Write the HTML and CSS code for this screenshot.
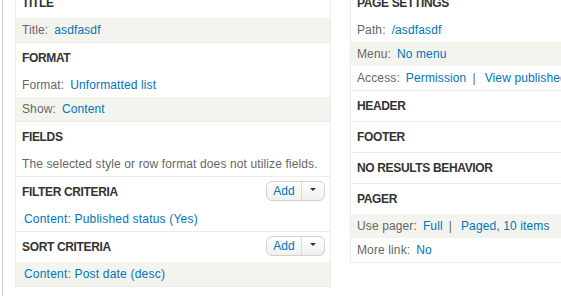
FILE: index.html
```html
<!DOCTYPE html>
<html>
<head>
<meta charset="utf-8">
<link rel="stylesheet" href="styles.css">
</head>
<body>
<div class="wrap">
  <div class="columns">
    <div class="col col-left">
      <section class="bucket">
        <h3 class="bucket-title">Title</h3>
        <div class="row alt"><span class="label">Title:</span><a class="link">asdfasdf</a></div>
      </section>
      <section class="bucket">
        <h3 class="bucket-title">Format</h3>
        <div class="row"><span class="label">Format:</span><a class="link">Unformatted list</a></div>
        <div class="row alt"><span class="label">Show:</span><a class="link">Content</a></div>
      </section>
      <section class="bucket">
        <h3 class="bucket-title">Fields</h3>
        <div class="row"><span class="label">The selected style or row format does not utilize fields.</span></div>
      </section>
      <section class="bucket">
        <h3 class="bucket-title">Filter criteria
          <span class="btn"><span class="btn-main">Add</span><span class="btn-drop"><span class="caret"></span></span></span>
        </h3>
        <div class="row indent"><a class="link">Content: Published status (Yes)</a></div>
      </section>
      <section class="bucket">
        <h3 class="bucket-title">Sort criteria
          <span class="btn"><span class="btn-main">Add</span><span class="btn-drop"><span class="caret"></span></span></span>
        </h3>
        <div class="row alt indent"><a class="link">Content: Post date (desc)</a></div>
      </section>
    </div>
    <div class="col col-right">
      <section class="bucket">
        <h3 class="bucket-title">Page settings</h3>
        <div class="row"><span class="label">Path:</span><a class="link">/asdfasdf</a></div>
        <div class="row alt"><span class="label">Menu:</span><a class="link">No menu</a></div>
        <div class="row"><span class="label">Access:</span><a class="link">Permission</a><span class="sep">|</span><a class="link">View published content</a></div>
      </section>
      <section class="bucket">
        <h3 class="bucket-title">Header</h3>
      </section>
      <section class="bucket">
        <h3 class="bucket-title">Footer</h3>
      </section>
      <section class="bucket">
        <h3 class="bucket-title">No results behavior</h3>
      </section>
      <section class="bucket">
        <h3 class="bucket-title">Pager</h3>
        <div class="row alt"><span class="label">Use pager:</span><a class="link">Full</a><span class="sep">|</span><a class="link">Paged, 10 items</a></div>
        <div class="row"><span class="label">More link:</span><a class="link">No</a></div>
      </section>
    </div>
  </div>
</div>
</body>
</html>
```

FILE: styles.css
```css
html, body {
  margin: 0;
  padding: 0;
  background: #fff;
  overflow: hidden;
}
body {
  font-family: "Liberation Sans", Arial, sans-serif;
  font-size: 12px;
  color: #333;
}
.wrap {
  margin-left: 2px;
  border-left: 1px solid #cfcfcf;
  padding-left: 12px;
  min-height: 320px;
}
.columns {
  display: flex;
  gap: 19px;
  margin-top: -13px;
  align-items: flex-start;
}
.col {
  flex: none;
  border: 1px solid #ececec;
  border-top: none;
  background: #fff;
}
.col-left {
  width: 314px;
}
.col-right {
  width: 320px;
}
.bucket {
  border-top: 1px solid #ececec;
}
.bucket-title {
  margin: 0;
  height: 30px;
  padding: 0 5px 0 6px;
  display: flex;
  align-items: center;
  justify-content: space-between;
  font-size: 12px;
  font-weight: bold;
  text-transform: uppercase;
  letter-spacing: -0.35px;
  color: #333;
}
.row {
  padding: 5px 6px;
  line-height: 14px;
  color: #666;
  white-space: nowrap;
  letter-spacing: 0.12px;
}
.row.alt {
  background: #f3f4ee;
}
.row.indent {
  padding-left: 8px;
  letter-spacing: 0.2px;
}
.label {
  margin-right: 6px;
}
.link {
  color: #0074bd;
  text-decoration: none;
}
.sep {
  color: #666;
  margin: 0 9px 0 6px;
}
.btn {
  display: flex;
  height: 18px;
  border: 1px solid #d0d0d0;
  border-radius: 6px;
  background: linear-gradient(#ffffff, #f0f0ec);
  margin-top: -2px;
  letter-spacing: 0;
}
.btn-main {
  width: 34px;
  text-align: center;
  line-height: 18px;
  font-weight: normal;
  text-transform: none;
  color: #0074bd;
}
.btn-drop {
  width: 23px;
  border-left: 1px solid #dcdcdc;
  display: flex;
  justify-content: center;
  padding-top: 6px;
  box-sizing: border-box;
}
.caret {
  width: 0;
  height: 0;
  border-left: 3px solid transparent;
  border-right: 3px solid transparent;
  border-top: 3px solid #333;
}
```
